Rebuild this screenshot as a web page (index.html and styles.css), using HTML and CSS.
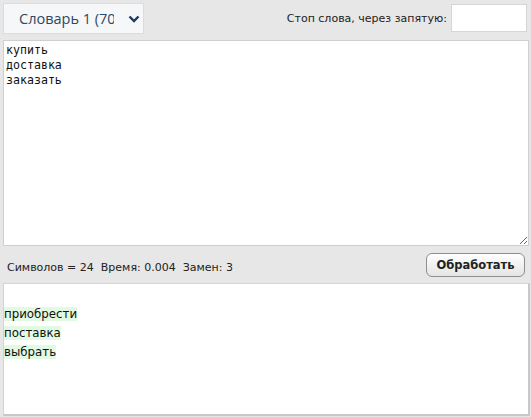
FILE: index.html
```html
<!DOCTYPE html>
<html lang="ru">
<head>
    <meta charset="UTF-8">
    <title>Замена слов</title>
    <link rel="stylesheet" href="styles.css">
</head>
<body>
    <div class="panel">
        <div class="toolbar">
            <div class="dict">
                <span class="dict-name">Словарь 1 (700)</span>
                <svg class="chevron" width="12" height="8" viewBox="0 0 12 8"><path d="M1.5 1.5 L6 6 L10.5 1.5" fill="none" stroke="#1e3a5c" stroke-width="2.4"/></svg>
            </div>
            <div class="stop">
                <label>Стоп слова, через запятую:</label>
                <input type="text" class="stop-input">
            </div>
        </div>
        <textarea class="source">купить
доставка
заказать</textarea>
        <div class="status">
            <span>Символов = 24&nbsp; Время: 0.004&nbsp; Замен: 3</span>
            <button class="run">Обработать</button>
        </div>
        <div class="result">
            <div class="line"><span class="hit">приобрести</span></div>
            <div class="line"><span class="hit">поставка</span></div>
            <div class="line"><span class="hit">выбрать</span></div>
        </div>
    </div>
</body>
</html>
```

FILE: styles.css
```css
body {
    margin: 0;
    background: #e7e7e7;
    font-family: "DejaVu Sans", Verdana, sans-serif;
}

.panel {
    width: 531px;
    height: 417px;
    display: flex;
    flex-direction: column;
    box-sizing: border-box;
}

.toolbar {
    display: flex;
    justify-content: space-between;
    padding: 3px 4px 0 4px;
    height: 37px;
    box-sizing: border-box;
    align-items: flex-start;
}

.dict {
    width: 141px;
    height: 31px;
    box-sizing: border-box;
    background: #f6f7f8;
    border: 1px solid #dcdcdc;
    display: flex;
    align-items: center;
    padding: 0 0 0 15px;
    color: #2c4863;
    font-family: "Open Sans", sans-serif;
    font-size: 14.5px;
    overflow: hidden;
    margin-left: -1px;
}

.dict-name {
    width: 95px;
    overflow: hidden;
    white-space: nowrap;
    flex: none;
}

.chevron {
    margin-left: 14px;
}

.stop {
    display: flex;
    align-items: center;
    gap: 4px;
    font-size: 11px;
    color: #222;
    padding-top: 1px;
}

.stop-input {
    width: 76px;
    height: 28px;
    box-sizing: border-box;
    border: 1px solid #d6d6d6;
    background: #fff;
    margin: 0;
    padding: 0;
}

.source {
    margin: 3px 2px 0 3px;
    height: 206px;
    box-sizing: border-box;
    border: 1px solid #cfcfcf;
    background: #fff;
    font-family: "DejaVu Sans Mono", monospace;
    font-size: 11.6px;
    line-height: 15px;
    padding: 2px 2px;
    color: #111;
    resize: both;
}

.status {
    display: flex;
    justify-content: space-between;
    align-items: center;
    height: 37px;
    padding: 0 6px 0 7px;
    font-size: 11px;
    color: #222;
}

.status span {
    padding-top: 6px;
}

.run {
    width: 99px;
    height: 24px;
    border: 1px solid #8e8e8e;
    border-radius: 6px;
    background: linear-gradient(#ffffff, #e4e4e4);
    font-family: "DejaVu Sans", sans-serif;
    font-size: 11.5px;
    font-weight: bold;
    color: #222;
    padding: 0;
    margin-top: 1px;
}

.result {
    flex: 1;
    margin: 0 1px 1px 3px;
    background: #fff;
    border: 1px solid #d4d4d4;
    border-right: 2px solid #c8c8c8;
    border-bottom: 2px solid #c8c8c8;
    padding: 21px 0 0 0;
    font-size: 11.8px;
    line-height: 19px;
    color: #111;
}

.hit {
    background: #e2f9e2;
}
```
